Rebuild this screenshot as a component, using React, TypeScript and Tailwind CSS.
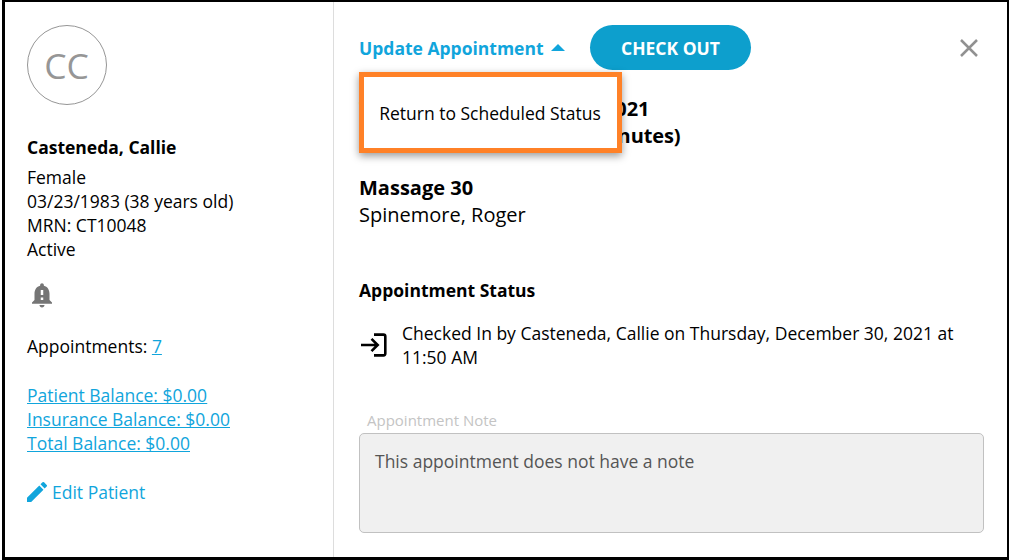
import React from "react";

const links = ["Patient Balance: $0.00", "Insurance Balance: $0.00", "Total Balance: $0.00"];

export default function App() {
  return (
    <div className="h-[560px] w-[1009px] overflow-hidden bg-white pl-[2px] font-['Open_Sans',sans-serif] text-[17.5px] leading-[24px] text-black">
      <div className="flex h-full border-t-2 border-r-2 border-b-[3px] border-l-[3px] border-black">
        <aside className="flex w-[329px] shrink-0 flex-col items-start border-r border-[#dddddd] pt-[23px] pl-[22px]">
          <div className="flex size-20 items-center justify-center rounded-full border border-[#969696] pr-px text-[35.5px] text-[#969696]">
            CC
          </div>
          <h2 className="mt-[30px] font-bold">Casteneda, Callie</h2>
          <div className="mt-[6px]">
            <p>Female</p>
            <p>03/23/1983 (38 years old)</p>
            <p>MRN: CT10048</p>
            <p>Active</p>
          </div>
          <svg className="mt-[19px] size-[30px]" viewBox="0 0 24 24" fill="#757575">
            <path d="M12 22c1.1 0 2-.9 2-2h-4c0 1.1.89 2 2 2zm6-6v-5c0-3.07-1.63-5.64-4.5-6.32V4c0-.83-.67-1.5-1.5-1.5s-1.5.67-1.5 1.5v.68C7.64 5.36 6 7.92 6 11v5l-2 2v1h16v-1l-2-2zm-5 0h-2v-2h2v2zm0-4h-2V8h2v4z" />
          </svg>
          <p className="mt-[24px]">
            Appointments: <a className="text-[#11a5dc] underline">7</a>
          </p>
          <div className="mt-[25px] flex flex-col items-start text-[#11a5dc] underline">
            {links.map((l) => (
              <a key={l}>{l}</a>
            ))}
          </div>
          <a className="mt-[25px] flex items-center gap-[5px] text-[#11a5dc]">
            <svg className="size-5" viewBox="3 3 18 18" fill="currentColor">
              <path d="M3 17.25V21h3.75L17.81 9.94l-3.75-3.75L3 17.25zM20.71 7.04a1 1 0 0 0 0-1.41l-2.34-2.34a1 1 0 0 0-1.41 0l-1.83 1.83 3.75 3.75 1.83-1.83z" />
            </svg>
            Edit Patient
          </a>
        </aside>
        <main className="flex grow flex-col pt-[23px] pr-[23px] pl-[25px]">
          <header className="flex h-[45px] items-center">
            <div className="relative w-[206px]">
              <button className="flex items-center gap-[7px] font-bold whitespace-nowrap text-[#11a5dc]">
                Update Appointment
                <svg className="h-[7px] w-[14px]" viewBox="0 0 14 7" fill="currentColor">
                  <path d="M0 7 7 0l7 7z" />
                </svg>
              </button>
              <div className="absolute top-[36px] left-0 z-10 flex h-[81px] w-[263px] items-center justify-center border-5 border-[#ff8127] bg-white pt-[2px] pr-px whitespace-nowrap shadow-[0_3px_8px_rgba(0,0,0,0.4)]">
                Return to Scheduled Status
              </div>
            </div>
            <button className="ml-[25px] h-[45px] w-[161px] rounded-full bg-[#0d9fcd] font-bold text-white">
              CHECK OUT
            </button>
            <svg className="mr-[6px] ml-auto size-[18px]" viewBox="0 0 18 18" fill="none" stroke="#919191" strokeWidth="2.5">
              <path d="m1 1 16 16M17 1 1 17" />
            </svg>
          </header>
          <div className="mt-[25px] text-[20px] leading-[27px] font-bold">
            <p>Thursday, December 30, 2021</p>
            <p className="tracking-[-0.1px]">11:00 AM - 11:30 AM (30 minutes)</p>
          </div>
          <div className="mt-[25px] text-[20px] leading-[27px]">
            <p className="font-bold">Massage 30</p>
            <p>Spinemore, Roger</p>
          </div>
          <h3 className="mt-[50px] font-bold">Appointment Status</h3>
          <div className="mt-[19px] flex items-center">
            <svg className="mr-[13px] size-[30px]" viewBox="0 0 30 30" fill="none" stroke="#000" strokeWidth="2.6">
              <path d="M15 4.6h9.5q1.8 0 1.8 1.8v17.2q0 1.8-1.8 1.8H15M2 15h16M12.5 8.8l6.2 6.2-6.2 6.2" />
            </svg>
            <p className="w-[570px]">Checked In by Casteneda, Callie on Thursday, December 30, 2021 at 11:50 AM</p>
          </div>
          <label className="mt-[39px] mb-px ml-[8px] text-[15px] text-[#c4c4c4]">Appointment Note</label>
          <div className="h-[100px] w-[625px] rounded-[5px] border border-[#c1c1c1] bg-[#f0f0f0] px-[15px] py-[15px] text-[#555555]">
            This appointment does not have a note
          </div>
        </main>
      </div>
    </div>
  );
}
